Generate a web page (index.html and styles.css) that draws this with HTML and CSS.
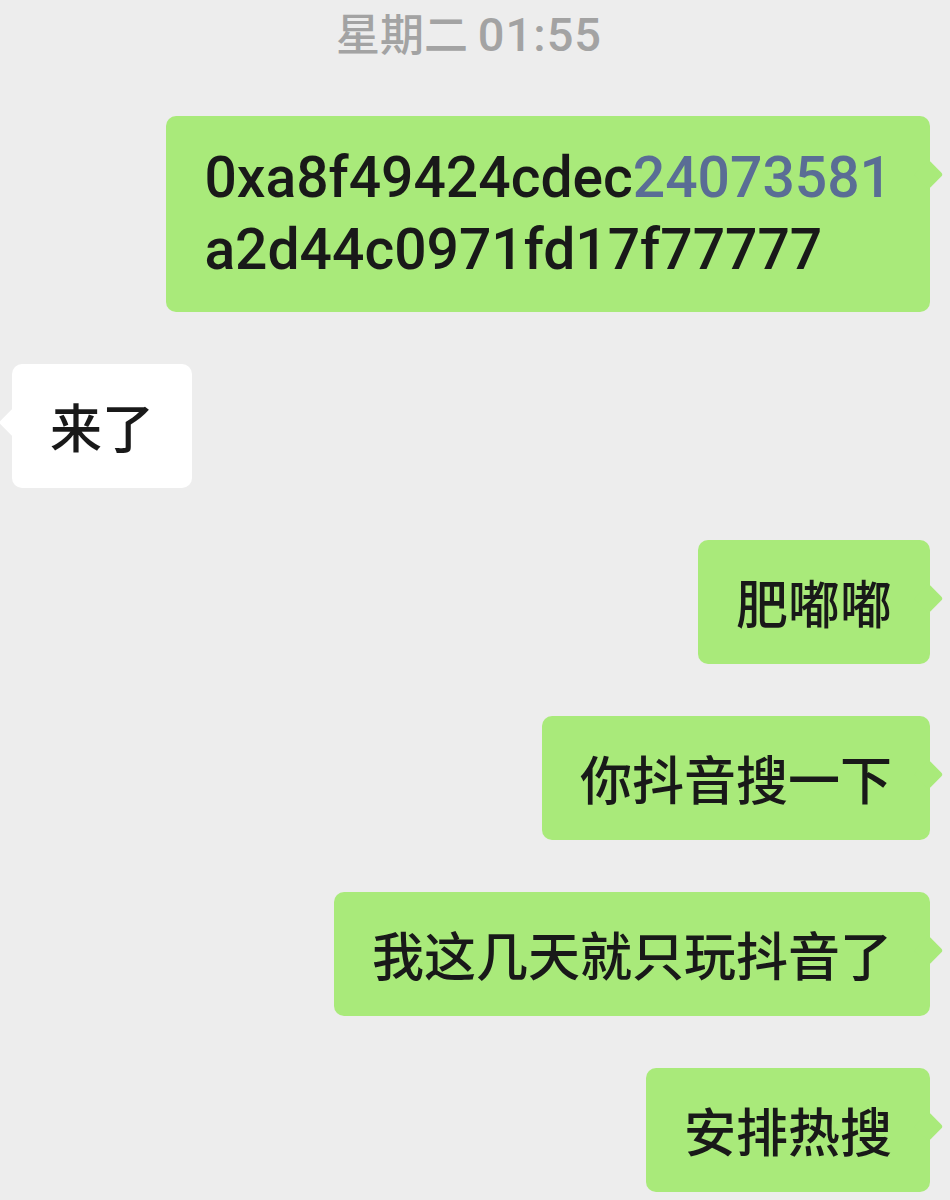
FILE: index.html
```html
<!DOCTYPE html>
<html lang="zh-CN">
<head>
  <meta charset="UTF-8">
  <meta name="viewport" content="width=device-width, initial-scale=1.0">
  <title>聊天</title>
  <link rel="stylesheet" href="styles.css">
</head>
<body>
  <div class="chat">
    <div class="time">星期二 <span class="clock">01:55</span></div>

    <div class="row me">
      <div class="bubble hex">0xa8f49424cdec<span class="link">24073581</span><br>a2d44c0971fd17f77777</div>
    </div>

    <div class="row other">
      <div class="bubble">来了</div>
    </div>

    <div class="row me">
      <div class="bubble">肥嘟嘟</div>
    </div>

    <div class="row me">
      <div class="bubble">你抖音搜一下</div>
    </div>

    <div class="row me">
      <div class="bubble">我这几天就只玩抖音了</div>
    </div>

    <div class="row me">
      <div class="bubble">安排热搜</div>
    </div>
  </div>
</body>
</html>
```

FILE: styles.css
```css
body {
  margin: 0;
  background-color: #ededed; /* WeChat chat background */
  font-family: "Noto Sans CJK SC", Roboto, sans-serif;
}
.chat {
  display: flex;
  flex-direction: column;
  gap: 52px;
  padding: 0 20px 0 12px;
}
.time {
  text-align: center;
  font-size: 44px;
  font-weight: 500;
  line-height: 64px;
  height: 64px;
  color: #a3a3a3;
  padding-right: 4px;
}
.time .clock {
  font-family: Roboto, sans-serif;
  font-size: 47px;
  letter-spacing: 1px;
}
.row {
  display: flex;
}
.row.me {
  justify-content: flex-end;
}
.row.other {
  justify-content: flex-start;
}
.bubble {
  position: relative;
  padding: 26px 38px;
  font-size: 52px;
  font-weight: 500;
  line-height: 72px;
  border-radius: 10px;
  color: #191919;
  background: #ffffff;
}
.me .bubble {
  background: #a9ea7a; /* green for own messages */
}
.bubble.hex {
  font-family: Roboto, sans-serif;
  font-size: 57px;
}
.bubble .link {
  color: #5a6d95;
}
/* little tail pointing at the speaker */
.bubble::after {
  content: "";
  position: absolute;
  top: 48px;
  width: 21px;
  height: 21px;
  background: inherit;
  border-radius: 3px;
  transform: rotate(45deg);
}
.me .bubble::after {
  right: -9px;
}
.other .bubble::after {
  left: -9px;
}
```
